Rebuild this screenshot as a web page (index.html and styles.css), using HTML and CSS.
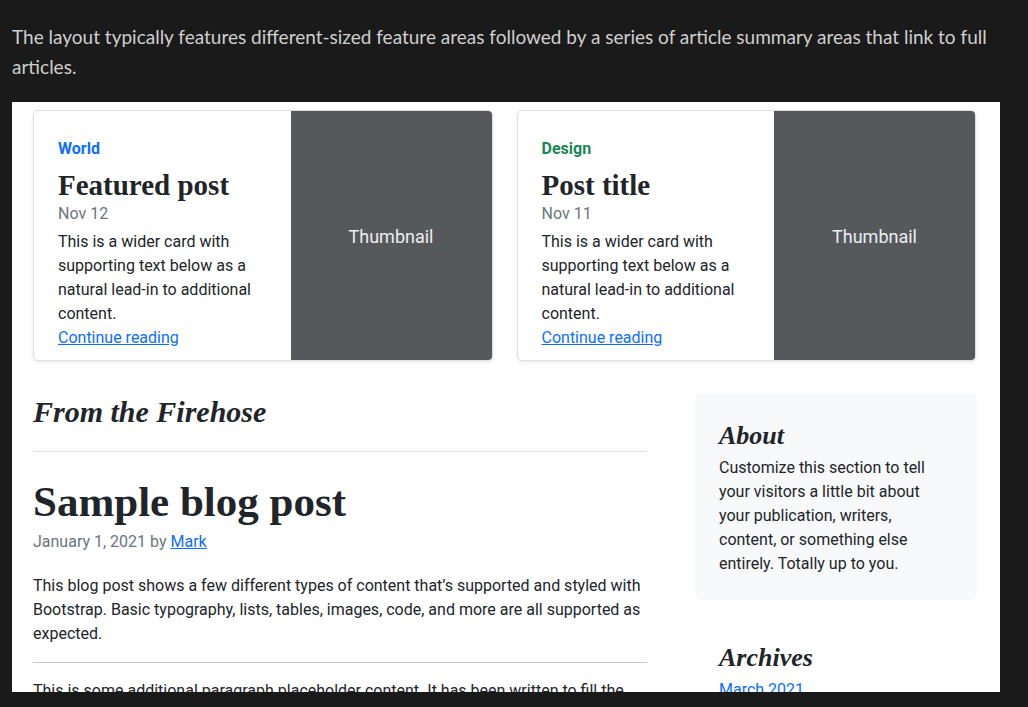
FILE: index.html
```html
<!DOCTYPE html>
<html lang="en">
<head>
<meta charset="utf-8">
<title>Blog layout</title>
<link rel="stylesheet" href="styles.css">
</head>
<body>
<p class="intro">The layout typically features different-sized feature areas followed by a series of article summary areas that link to full articles.</p>
<div class="frame">
  <div class="featured">
    <div class="card">
      <div class="card-body">
        <strong class="tag tag-blue">World</strong>
        <h3 class="card-title">Featured post</h3>
        <div class="muted date">Nov 12</div>
        <p class="card-text">This is a wider card with<br>supporting text below as a<br>natural lead-in to additional<br>content.</p>
        <a href="#" class="link">Continue reading</a>
      </div>
      <div class="thumb">Thumbnail</div>
    </div>
    <div class="card">
      <div class="card-body">
        <strong class="tag tag-green">Design</strong>
        <h3 class="card-title">Post title</h3>
        <div class="muted date">Nov 11</div>
        <p class="card-text">This is a wider card with<br>supporting text below as a<br>natural lead-in to additional<br>content.</p>
        <a href="#" class="link">Continue reading</a>
      </div>
      <div class="thumb">Thumbnail</div>
    </div>
  </div>
  <div class="main-row">
    <div class="main-col">
      <h3 class="section-title">From the Firehose</h3>
      <article class="post">
        <h2 class="post-title">Sample blog post</h2>
        <p class="post-meta">January 1, 2021 by <a href="#" class="link">Mark</a></p>
        <p class="para">This blog post shows a few different types of content that’s supported and styled with Bootstrap. Basic typography, lists, tables, images, code, and more are all supported as expected.</p>
        <hr class="rule">
        <p class="para">This is some additional paragraph placeholder content. It has been written to fill the available space and show how a longer snippet of text affects the surrounding content.</p>
      </article>
    </div>
    <aside class="side-col">
      <div class="about">
        <h4 class="side-title">About</h4>
        <p class="about-text">Customize this section to tell<br>your visitors a little bit about<br>your publication, writers,<br>content, or something else<br>entirely. Totally up to you.</p>
      </div>
      <div class="archives">
        <h4 class="side-title">Archives</h4>
        <ol class="archive-list">
          <li><a href="#" class="plain-link">March 2021</a></li>
          <li><a href="#" class="plain-link">February 2021</a></li>
        </ol>
      </div>
    </aside>
  </div>
</div>
</body>
</html>
```
FILE: styles.css
```css
* { box-sizing: border-box; }

html, body {
  margin: 0;
  background: #1a1a1a;
}

body {
  padding: 22px 28px 0 12px;
  height: 707px;
  overflow: hidden;
}

.intro {
  margin: 0 0 20px 0;
  font-family: Lato, "Noto Sans", sans-serif;
  font-size: 19px;
  line-height: 30px;
  color: #cfcfcf;
}

.frame {
  width: 988px;
  height: 590px;
  overflow: hidden;
  background: #ffffff;
  padding: 8px 24px 0 21px;
  font-family: Roboto, "Noto Sans", sans-serif;
  font-size: 16px;
  line-height: 24px;
  color: #212529;
}

.featured {
  display: grid;
  grid-template-columns: 1fr 1fr;
  column-gap: 24px;
  margin-bottom: 33px;
}

.card {
  display: flex;
  height: 251px;
  border: 1px solid rgba(0, 0, 0, 0.125);
  border-radius: 5px;
  box-shadow: 0 2px 4px rgba(0, 0, 0, 0.075);
  overflow: hidden;
}

.card-body {
  flex: 1;
  padding: 26px 24px 24px 24px;
  display: flex;
  flex-direction: column;
  align-items: flex-start;
}

.tag {
  font-weight: 700;
  margin-bottom: 7px;
}
.tag-blue { color: #0d6efd; }
.tag-green { color: #198754; }

.card-title,
.section-title,
.post-title,
.side-title {
  font-family: "Liberation Serif", "Times New Roman", serif;
  font-weight: 700;
  margin: 0;
}

.card-title {
  font-size: 29px;
  line-height: 34px;
}

.muted, .post-meta { color: #6c757d; }

.date { margin-bottom: 4px; }

.card-text { margin: 0; }

.link {
  color: #0d6efd;
  text-decoration: underline;
}

.thumb {
  width: 201px;
  flex: none;
  background: #55595c;
  color: #eceeef;
  font-size: 18px;
  padding-top: 2px;
  display: flex;
  align-items: center;
  justify-content: center;
}

.main-row {
  display: grid;
  grid-template-columns: 614px 282px;
  column-gap: 48px;
}

.section-title {
  font-style: italic;
  font-size: 30px;
  line-height: 34px;
  padding-top: 1px;
  padding-bottom: 22px;
  margin-bottom: 26px;
  border-bottom: 1px solid #dee2e6;
}

.post-title {
  font-size: 43px;
  line-height: 48px;
  margin-bottom: 4px;
}

.post-meta {
  margin: 0 0 20px 0;
}

.para { margin: 0 0 16px 0; }

.rule {
  border: 0;
  border-top: 1px solid #c8c9ca;
  margin: 16px 0;
}

.about {
  background: #f8f9fa;
  border-radius: 5px;
  padding: 27px 24px 24px 24px;
  margin-bottom: 16px;
}

.side-title {
  font-style: italic;
  font-size: 26px;
  line-height: 29px;
  margin-bottom: 6px;
}

.about-text { margin: 0; }

.archives { padding: 27px 24px 24px 24px; }

.archive-list {
  list-style: none;
  margin: 0;
  padding: 0;
}

.plain-link {
  color: #0d6efd;
  text-decoration: none;
}
```
